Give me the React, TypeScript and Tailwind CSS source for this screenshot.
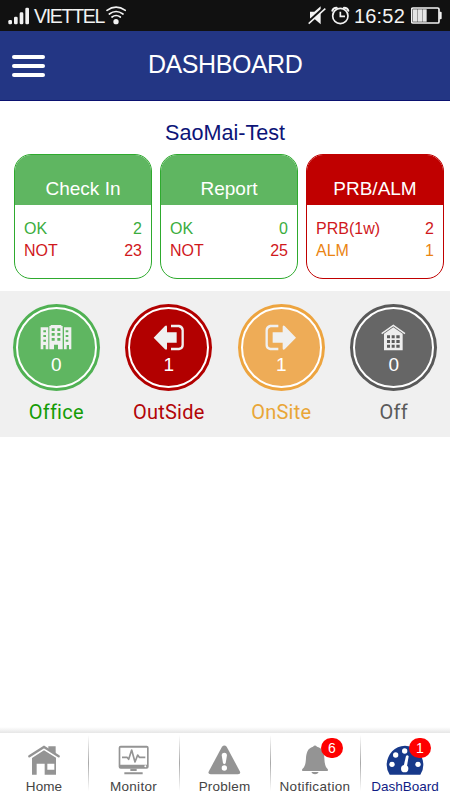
import React from 'react';

const SignalIcon = () => (
  <svg width="22" height="18" viewBox="24 23 66 54" fill="#f2f2f2">
    <rect x="25" y="62" width="11" height="13" rx="4" />
    <rect x="42" y="52" width="11" height="23" rx="4" />
    <rect x="59" y="39" width="11" height="36" rx="4" />
    <rect x="76" y="25" width="11" height="50" rx="4" />
  </svg>
);

const WifiIcon = () => (
  <svg width="20" height="19" viewBox="318 19 60 57" fill="none" stroke="#f2f2f2" strokeWidth="5" strokeLinecap="round">
    <path d="M321 32 Q348 13 376 32" />
    <path d="M328 43 Q348 28 369 43" />
    <path d="M336 52 Q348 43 361 52" />
    <circle cx="348" cy="66" r="8" fill="#f2f2f2" stroke="none" />
  </svg>
);

const MuteIcon = () => (
  <svg width="18" height="19" viewBox="248 18 54 57">
    <path d="M254 35h13l19-16v54l-19-17h-13z" fill="#f2f2f2" />
    <path d="M248 67 L298 22" stroke="#111" strokeWidth="8" />
    <path d="M250 71 L300 26" stroke="#f2f2f2" strokeWidth="4.5" />
  </svg>
);

const AlarmIcon = () => (
  <svg width="19" height="19" viewBox="315 18 57 57" fill="none" stroke="#f2f2f2" strokeWidth="5">
    <circle cx="343" cy="48" r="23" />
    <path d="M343 35v14h14" />
    <path d="M319 32q2-9 13-9M367 32q-2-9-13-9" strokeWidth="6" strokeLinecap="round" />
  </svg>
);

const BatteryIcon = () => (
  <svg width="31" height="17" viewBox="558 23 93 51">
    <rect x="560" y="26" width="82" height="45" rx="4" fill="none" stroke="#f2f2f2" strokeWidth="5" />
    <path d="M643 37h4q3 0 3 3v17q0 3-3 3h-4z" fill="#f2f2f2" />
    <path d="M564 30h13v37h-13zM578 30h13v37h-13zM592 30h13v37h-13z" fill="#e4e4e4" />
  </svg>
);

const OfficeIcon = () => (
  <svg width="32" height="25" viewBox="121 119 96 75" fill="#f0f0f0">
    <path
      fillRule="evenodd"
      d="M123 126h23v66h-8v-13h-7v13h-8zM131 135v6h8v-6zM131 149v6h8v-6zM131 163v6h8v-6z
         M149 122h40v70h-14v-14h-12v14h-14zM156 129v8h9v-8zM173 129v8h9v-8zM156 143v8h9v-8zM173 143v8h9v-8zM156 158v8h9v-8zM173 158v8h9v-8z
         M193 126h22v66h-7v-13h-7v13h-8zM198 135v6h8v-6zM198 149v6h8v-6zM198 163v6h8v-6z"
    />
    <rect x="153" y="119" width="32" height="4" />
  </svg>
);

const OutIcon = () => (
  <svg width="32" height="27" viewBox="459 115 96 81">
    <path d="M461 156 L495 121 Q500 117 501 123 V140 H530 V171 H501 V189 Q500 194 495 191 Z" fill="#f0f0f0" />
    <path d="M513 121h24q11 3 11 13v44q0 10-11 12h-24" fill="none" stroke="#f0f0f0" strokeWidth="7" />
  </svg>
);

const InIcon = () => (
  <svg width="32" height="27" viewBox="127 115 96 81">
    <path d="M220 156 L186 121 Q181 117 180 123 V140 H150 V171 H180 V189 Q181 194 186 191 Z" fill="#f0f0f0" />
    <path d="M167 121h-24q-11 3-11 13v44q0 10 11 12h24" fill="none" stroke="#f0f0f0" strokeWidth="7" />
  </svg>
);

const OffIcon = () => (
  <svg width="25" height="27" viewBox="470 115 75 81">
    <path d="M472 144 L507 119 L542 144" fill="none" stroke="#f0f0f0" strokeWidth="4" />
    <path d="M507 125 L535 144 V194 H479 V144 Z" fill="#eee" />
    <path
      d="M488 149h9v9h-9zM502 149h9v9h-9zM516 149h10v9h-10zM488 163h9v9h-9zM502 163h9v9h-9zM516 163h10v9h-10zM488 177h9v9h-9zM502 177h9v9h-9zM516 177h10v9h-10z"
      fill="#5c5c5c"
    />
  </svg>
);

const HomeIcon = () => (
  <svg width="32" height="30" viewBox="83 58 96 90">
    <path d="M87 92 L131 64 L175 92" fill="none" stroke="#949494" strokeWidth="7" strokeLinecap="round" />
    <path d="M144 62h22v24l-22-14z" fill="#949494" />
    <path fillRule="evenodd" d="M131 74 L167 96V147H133V114H109V147H95V97ZM141 114V132H162V114Z" fill="#949494" />
  </svg>
);

const MonitorIcon = () => (
  <svg width="32" height="30" viewBox="357 58 96 90">
    <path fillRule="evenodd" d="M365 60h78q6 0 6 6v57q0 6-6 6h-78q-6 0-6-6v-57q0-6 6-6zM364 66v51h80v-51z" fill="#949494" />
    <path d="M369 95h15l5 6 9-28 10 36 8-21 5 7h18" fill="none" stroke="#949494" strokeWidth="5" strokeLinejoin="round" />
    <path d="M394 129h19v7h-19zM376 140h55v6h-55z" fill="#949494" />
    <circle cx="439" cy="122" r="3" fill="#fff" />
  </svg>
);

const ProblemIcon = () => (
  <svg width="33" height="30" viewBox="175 58 99 90">
    <path d="M217 63q7-7 14 0l39 73q5 10-5 10h-82q-10 0-5-10z" fill="#949494" />
    <path d="M216 88q1-7 8-7t8 7l-4 25q-4 5-8 0z" fill="#fff" />
    <circle cx="224" cy="127" r="8" fill="#fff" />
  </svg>
);

const BellIcon = () => (
  <svg width="28" height="30" viewBox="3 58 84 90" fill="#949494">
    <path d="M39 63q6-7 12 0c18 4 21 19 22 34 1 19 3 26 10 33q3 6-2 6H9q-5 0-2-6c8-7 10-15 11-33 1-15 5-30 21-34z" />
    <path d="M34 139h22q-3 7-11 7t-11-7z" />
  </svg>
);

const GaugeIcon = () => (
  <svg width="38" height="31" viewBox="261 57 114 93">
    <path d="M272 146q-9-14-9-29c0-30 23-58 55-58s55 28 55 58q0 15-9 29z" fill="#17398a" />
    <g fill="#fff">
      <circle cx="279" cy="115" r="8" />
      <circle cx="290" cy="87" r="8" />
      <circle cx="317" cy="75" r="8" />
      <circle cx="357" cy="115" r="8" />
      <circle cx="317" cy="128" r="11" />
      <path d="M313 124 L321 90 Q325 85 329 91 L323 126 Z" />
    </g>
  </svg>
);

interface CardRow {
  label: string;
  value: number;
  color: string;
}

interface CardProps {
  title: string;
  border: string;
  header: string;
  rows: CardRow[];
}

const StatCard: React.FC<CardProps> = ({ title, border, header, rows }) => (
  <div className={`h-[125px] w-[138px] overflow-hidden rounded-[17px] border bg-white ${border}`}>
    <div className={`h-[50px] pt-[20px] text-center text-[19px] leading-7 text-white ${header}`}>{title}</div>
    <div className="px-[9px] pt-[13px] text-[16px] leading-[22px]">
      {rows.map((row) => (
        <div key={row.label} className={`flex justify-between ${row.color}`}>
          <span>{row.label}</span>
          <span>{row.value}</span>
        </div>
      ))}
    </div>
  </div>
);

const cards: CardProps[] = [
  {
    title: 'Check In',
    border: 'border-[#2eaa2e]',
    header: 'bg-[#5fb661]',
    rows: [
      { label: 'OK', value: 2, color: 'text-[#3bad3e]' },
      { label: 'NOT', value: 23, color: 'text-[#d0181c]' },
    ],
  },
  {
    title: 'Report',
    border: 'border-[#2eaa2e]',
    header: 'bg-[#5fb661]',
    rows: [
      { label: 'OK', value: 0, color: 'text-[#3bad3e]' },
      { label: 'NOT', value: 25, color: 'text-[#d0181c]' },
    ],
  },
  {
    title: 'PRB/ALM',
    border: 'border-[#c00000]',
    header: 'bg-[#c00000]',
    rows: [
      { label: 'PRB(1w)', value: 2, color: 'text-[#d0181c]' },
      { label: 'ALM', value: 1, color: 'text-[#ea8412]' },
    ],
  },
];

const statuses = [
  { label: 'Office', count: 0, icon: <OfficeIcon />, ring: 'bg-[#50b153]', fill: 'bg-[#5fb661]', text: 'text-[#149c05]' },
  { label: 'OutSide', count: 1, icon: <OutIcon />, ring: 'bg-[#b20000]', fill: 'bg-[#b20000]', text: 'text-[#b30508]' },
  { label: 'OnSite', count: 1, icon: <InIcon />, ring: 'bg-[#eda43f]', fill: 'bg-[#eeac57]', text: 'text-[#e9a637]' },
  { label: 'Off', count: 0, icon: <OffIcon />, ring: 'bg-[#595959]', fill: 'bg-[#666666]', text: 'text-[#5b5b5b]' },
];

const tabs = [
  { label: 'Home', icon: <HomeIcon />, badge: 0, badgePos: '', text: 'text-[#444] tracking-[0.1px]', width: 'w-[88px]' },
  { label: 'Monitor', icon: <MonitorIcon />, badge: 0, badgePos: '', text: 'text-[#444] tracking-[0.3px]', width: 'w-[91px]' },
  { label: 'Problem', icon: <ProblemIcon />, badge: 0, badgePos: '', text: 'text-[#444] tracking-[0.2px]', width: 'w-[91px]' },
  { label: 'Notification', icon: <BellIcon />, badge: 6, badgePos: '-right-[14px]', text: 'text-[#444] tracking-[0.35px]', width: 'w-[90px]' },
  { label: 'DashBoard', icon: <GaugeIcon />, badge: 1, badgePos: '-right-[7px]', text: 'text-[#101c85]', width: 'w-[90px]' },
];

const App: React.FC = () => {
  return (
    <div className="flex h-[800px] w-[450px] flex-col overflow-hidden bg-white font-['Liberation_Sans',Arial,sans-serif]">
      {/* --- Status bar --- */}
      <div className="flex h-[31px] items-center justify-between bg-[#111] pl-2 pr-[8px] text-[#f2f2f2]">
        <div className="flex items-center">
          <SignalIcon />
          <span className="ml-[4px] w-[72px] pt-[2px] text-[19.5px] leading-[31px] tracking-[-1.3px]">VIETTEL</span>
          <WifiIcon />
        </div>
        <div className="flex items-center">
          <MuteIcon />
          <span className="ml-[5px] flex"><AlarmIcon /></span>
          <span className="ml-[4px] mr-[6px] pt-[2px] text-[20px] leading-[31px] tracking-[0.2px]">16:52</span>
          <BatteryIcon />
        </div>
      </div>

      {/* --- Header --- */}
      <header className="flex h-[70px] items-center border-b border-[#0b1270] bg-[#233684] pl-3">
        <button className="flex w-[33px] flex-col gap-[5px]">
          <span className="h-[4px] rounded-full bg-white"></span>
          <span className="h-[4px] rounded-full bg-white"></span>
          <span className="h-[4px] rounded-full bg-white"></span>
        </button>
        <h1 className="ml-[103px] pb-[3px] text-[25px] leading-none tracking-[-0.45px] text-white">DASHBOARD</h1>
      </header>

      <h2 className="pt-[18px] text-center text-[21.6px] leading-7 text-[#0c1478]">SaoMai-Test</h2>

      <div className="mt-[7px] flex gap-2 pl-[14px]">
        {cards.map((card) => (
          <StatCard key={card.title} {...card} />
        ))}
      </div>

      {/* --- Staff status --- */}
      <div className="mt-3 flex h-[146px] bg-[#f0f0f0] pt-[13px]">
        {statuses.map((item) => (
          <div key={item.label} className="flex w-[112.5px] flex-col items-center">
            <div className={`size-[87px] rounded-full p-[3px] ${item.ring}`}>
              <div className={`flex size-full flex-col items-center rounded-full border-2 border-white pt-[14px] ${item.fill}`}>
                <span className="flex h-[28px] items-center">{item.icon}</span>
                <span className="text-[19px] leading-[28px] text-white">{item.count}</span>
              </div>
            </div>
            <span className={`mt-[9px] font-['Roboto',sans-serif] text-[20px] leading-6 tracking-[0.25px] ${item.text}`}>{item.label}</span>
          </div>
        ))}
      </div>

      {/* --- Bottom tabs --- */}
      <nav className="mt-auto h-[73px] shrink-0">
        <div className="h-[6px] bg-linear-to-b from-white to-[#e6e6e6]"></div>
        <div className="flex">
          {tabs.map((tab, i) => (
            <div key={tab.label} className={`relative flex h-[67px] flex-col items-center pt-[12px] ${tab.width}`}>
              {i > 0 && (
                <span className="absolute left-0 top-[2px] h-[56px] w-px bg-linear-to-b from-white via-[#a8a8a8] to-white"></span>
              )}
              <div className="relative flex h-[31px] items-start">
                {tab.icon}
                {tab.badge > 0 && (
                  <span className={`absolute -top-[7px] flex h-[20px] w-[22px] items-center justify-center rounded-full bg-[#fe0000] text-[14px] text-white ${tab.badgePos}`}>
                    {tab.badge}
                  </span>
                )}
              </div>
              <span className={`mt-[2px] whitespace-nowrap text-[13.5px] leading-[18px] ${tab.text}`}>{tab.label}</span>
            </div>
          ))}
        </div>
      </nav>
    </div>
  );
};

export default App;
